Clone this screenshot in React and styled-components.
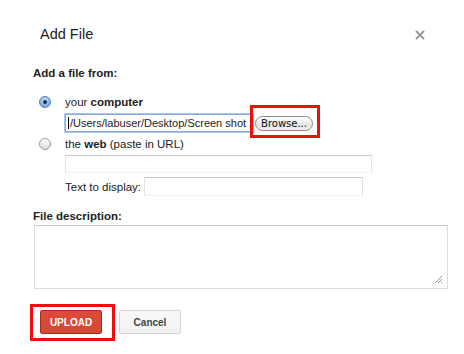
import React from 'react'
import styled, { createGlobalStyle } from 'styled-components'

const GlobalStyle = createGlobalStyle`
  html, body {
    margin: 0;
    padding: 0;
    background: #fff;
  }
  body {
    font-family: "Liberation Sans", Arial, sans-serif;
    color: #222;
  }
`

const Dialog = styled.div`
  width: 464px;
  height: 354px;
  box-sizing: border-box;
  padding: 24px 16px 0 33px;
  background: #fff;
  display: flex;
  flex-direction: column;
`

const Header = styled.div`
  display: flex;
  justify-content: space-between;
  align-items: center;
  height: 20px;
  padding-left: 7px;
  padding-right: 22px;
`

const Title = styled.h1`
  margin: 0;
  font-size: 14.5px;
  font-weight: normal;
  line-height: 20px;
  color: #222;
`

const Close = styled.button`
  width: 12px;
  height: 12px;
  padding: 0;
  border: 0;
  background: none;
  display: flex;
  cursor: pointer;
  margin-top: 2px;
`

const SectionLabel = styled.div`
  margin-top: ${(p) => p.top}px;
  font-size: 11.5px;
  font-weight: bold;
  line-height: 16px;
  color: #222;
`

const Options = styled.div`
  padding-left: 6px;
  display: flex;
  flex-direction: column;
`

const OptionRow = styled.label`
  display: flex;
  align-items: center;
  gap: 14px;
  margin-top: ${(p) => p.top}px;
  font-size: 11.5px;
  line-height: 16px;
  color: #222;
`

const Radio = styled.span`
  width: 12px;
  height: 12px;
  border-radius: 50%;
  box-sizing: border-box;
  display: flex;
  align-items: center;
  justify-content: center;
  border: 1px solid ${(p) => (p.checked ? '#5b7fb3' : '#9a9a9a')};
  background: ${(p) =>
    p.checked
      ? 'radial-gradient(circle at 50% 35%, #d6e8fb 0%, #80b2e6 60%, #5a90d0 100%)'
      : 'linear-gradient(#fdfdfd, #dcdcdc)'};
  &::after {
    content: '';
    display: ${(p) => (p.checked ? 'block' : 'none')};
    width: 4px;
    height: 4px;
    border-radius: 50%;
    background: #1f2a3a;
  }
`

const Indent = styled.div`
  padding-left: 26px;
  display: flex;
  align-items: center;
  margin-top: ${(p) => p.top}px;
`

const FileBox = styled.div`
  width: 188px;
  height: 18px;
  box-sizing: border-box;
  border: 1px solid #8aa9d6;
  box-shadow: 0 0 0 1px #a9c6ee;
  background: #fff;
  font-family: "Liberation Sans", Arial, sans-serif;
  font-size: 11px;
  line-height: 16px;
  color: #222;
  white-space: nowrap;
  overflow: hidden;
  padding-left: 2px;
`

const Caret = styled.span`
  display: inline-block;
  width: 1px;
  height: 12px;
  background: #000;
  vertical-align: -2px;
  margin-right: 1px;
`

const BrowseWrap = styled.span`
  position: relative;
  margin-left: 2px;
  display: flex;
`

const Browse = styled.button`
  width: 58px;
  height: 15px;
  padding: 0;
  border: 1px solid #8a8a8a;
  border-radius: 8px;
  background: linear-gradient(#ffffff, #e4e4e4 60%, #f0f0f0);
  font-family: "DejaVu Sans", "Liberation Sans", sans-serif;
  font-size: 10px;
  line-height: 13px;
  color: #111;
`

const Highlight = styled.span`
  position: absolute;
  left: ${(p) => p.l}px;
  top: ${(p) => p.t}px;
  right: ${(p) => p.r}px;
  bottom: ${(p) => p.b}px;
  border: 3px solid #f20d0d;
  pointer-events: none;
`

const TextField = styled.div`
  width: ${(p) => p.w}px;
  height: ${(p) => p.h}px;
  box-sizing: border-box;
  border: 1px solid #e2e2e2;
  border-top-color: #c8c8c8;
  border-bottom-color: #f4f4f4;
  background: #fff;
`

const InlineLabel = styled.span`
  font-size: 11.5px;
  line-height: 16px;
  color: #222;
  width: 79px;
  flex: none;
`

const TextArea = styled.div`
  position: relative;
  margin-top: 1px;
  margin-left: 1px;
  width: 414px;
  height: 64px;
  box-sizing: border-box;
  border: 1px solid #dcdcdc;
  border-top-color: #c8c8c8;
  background: #fff;
`

const Grip = styled.svg`
  position: absolute;
  right: 4px;
  bottom: 4px;
`

const Buttons = styled.div`
  display: flex;
  align-items: center;
  margin-top: 21px;
  padding-left: 7px;
  gap: 17px;
`

const UploadWrap = styled.span`
  position: relative;
  display: flex;
`

const Button = styled.button`
  height: 24px;
  box-sizing: border-box;
  padding: 0;
  width: ${(p) => p.w}px;
  border-radius: 2px;
  font-family: "Liberation Sans", Arial, sans-serif;
  font-size: 10px;
  font-weight: bold;
  border: 1px solid ${(p) => (p.primary ? '#b0281a' : '#d4d4d4')};
  background: ${(p) =>
    p.primary ? 'linear-gradient(#dd4b39, #d14836)' : 'linear-gradient(#f8f8f8, #f1f1f1)'};
  color: ${(p) => (p.primary ? '#fff' : '#444')};
`

export default function App() {
  return (
    <>
      <GlobalStyle />
      <Dialog>
        <Header>
          <Title>Add File</Title>
          <Close aria-label="Close">
            <svg width="12" height="12" viewBox="0 0 12 12">
              <path d="M2 2 L10 10 M10 2 L2 10" stroke="#9a9a9a" strokeWidth="2" />
            </svg>
          </Close>
        </Header>

        <SectionLabel top={21}>Add a file from:</SectionLabel>

        <Options>
          <OptionRow top={13}>
            <Radio checked />
            <span>your <b>computer</b></span>
          </OptionRow>
          <Indent top={4}>
            <FileBox>
              <Caret />/Users/labuser/Desktop/Screen shot 20
            </FileBox>
            <BrowseWrap>
              <Browse>Browse...</Browse>
              <Highlight l={-5} t={-11} r={-7} b={-7} />
            </BrowseWrap>
          </Indent>
          <OptionRow top={4}>
            <Radio />
            <span>the <b>web</b> (paste in URL)</span>
          </OptionRow>
          <Indent top={3}>
            <TextField w={307} h={18} />
          </Indent>
          <Indent top={4}>
            <InlineLabel>Text to display:</InlineLabel>
            <TextField w={219} h={19} />
          </Indent>
        </Options>

        <SectionLabel top={12}>File description:</SectionLabel>
        <TextArea>
          <Grip width="9" height="9" viewBox="0 0 9 9">
            <path d="M1 8 L8 1 M4 8 L8 4 M7 8 L8 7" stroke="#999" strokeWidth="1" />
          </Grip>
        </TextArea>

        <Buttons>
          <UploadWrap>
            <Button primary w={62}>UPLOAD</Button>
            <Highlight l={-10} t={-6} r={-13} b={-7} />
          </UploadWrap>
          <Button w={62}>Cancel</Button>
        </Buttons>
      </Dialog>
    </>
  )
}
